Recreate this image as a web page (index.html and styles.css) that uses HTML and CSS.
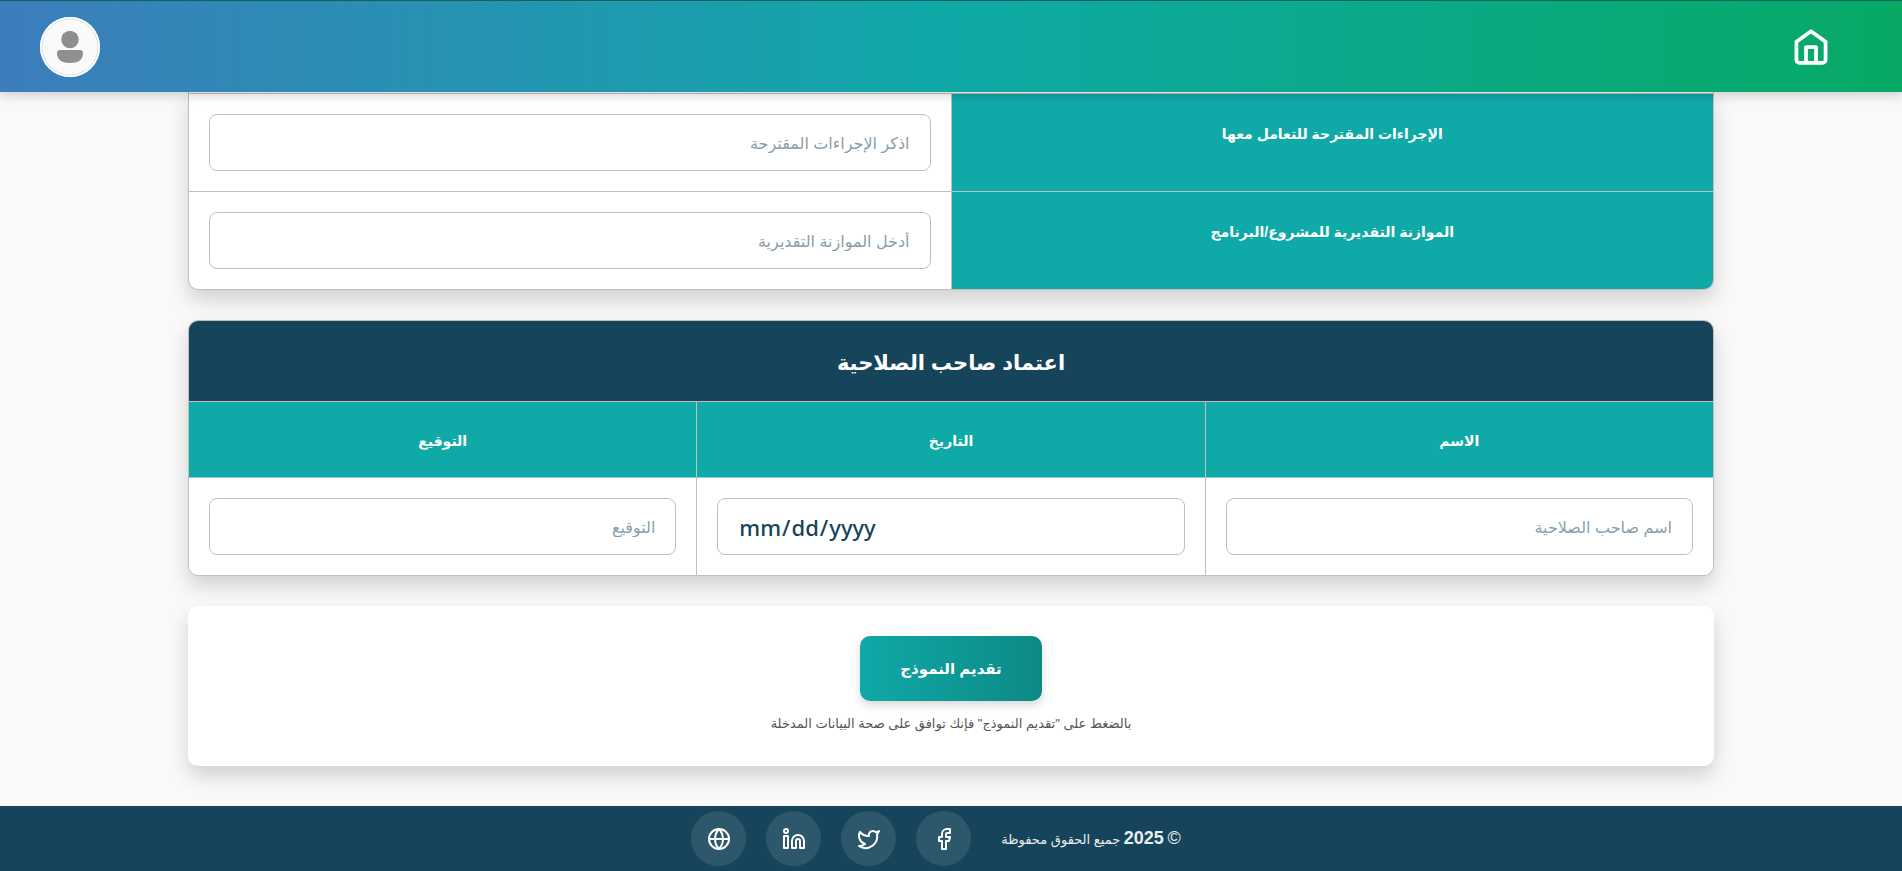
FILE: index.html
```html
<!DOCTYPE html>
<html lang="ar" dir="rtl">
<head>
<meta charset="utf-8">
<title>نموذج المشروع</title>
<meta name="viewport" content="width=device-width, initial-scale=1">
<link rel="stylesheet" href="styles.css">
</head>
<body>
<header class="topbar">
  <a class="home" href="#" aria-label="الرئيسية">
    <svg viewBox="0 0 24 24" width="50" height="50"><path d="M5 9.500 12 4.400l7 5.100v8.700a1.400 1.400 0 0 1-1.400 1.400H6.400A1.400 1.400 0 0 1 5 18.200z"/><path d="M9.600 19.500V12h4.800v7.500"/></svg>
  </a>
  <button class="avatar" type="button" aria-label="الملف الشخصي">
    <svg viewBox="0 0 60 60" width="60" height="60"><circle class="avatar-ring" cx="30" cy="30" r="28"/><circle cx="30" cy="22.500" r="8.700"/><path d="M20 33h20a3 3 0 0 1 3 3c0 7-5 10-13 10s-13-3-13-10a3 3 0 0 1 3-3z"/></svg>
  </button>
</header>

<main class="content">
  <section class="card fields">
    <div class="field">
      <label class="field-name" for="actions">الإجراءات المقترحة للتعامل معها</label>
      <div class="cell"><input class="input" id="actions" type="text" placeholder="اذكر الإجراءات المقترحة"></div>
    </div>
    <div class="field">
      <label class="field-name" for="budget">الموازنة التقديرية للمشروع/البرنامج</label>
      <div class="cell"><input class="input" id="budget" type="text" placeholder="أدخل الموازنة التقديرية"></div>
    </div>
  </section>

  <section class="card approval">
    <h2 class="card-title">اعتماد صاحب الصلاحية</h2>
    <div class="columns">
      <div class="column">
        <label class="column-name" for="name">الاسم</label>
        <div class="cell"><input class="input" id="name" type="text" placeholder="اسم صاحب الصلاحية"></div>
      </div>
      <div class="column">
        <label class="column-name" for="date">التاريخ</label>
        <div class="cell"><input class="input date" id="date" type="date" lang="en-US"></div>
      </div>
      <div class="column">
        <label class="column-name" for="signature">التوقيع</label>
        <div class="cell"><input class="input" id="signature" type="text" placeholder="التوقيع"></div>
      </div>
    </div>
  </section>

  <section class="card submit">
    <button class="submit-button" type="submit">تقديم النموذج</button>
    <p class="note">بالضغط على "تقديم النموذج" فإنك توافق على صحة البيانات المدخلة</p>
  </section>
</main>

<footer class="footer">
  <p class="copyright"><span class="mark">©</span> <b class="year">2025</b> جميع الحقوق محفوظة</p>
  <nav class="social">
    <a class="social-link" href="#" aria-label="فيسبوك"><svg viewBox="0 0 24 24" width="24" height="24"><path d="M18 2h-3a5 5 0 0 0-5 5v3H7v4h3v8h4v-8h3l1-4h-4V7a1 1 0 0 1 1-1h3z"/></svg></a>
    <a class="social-link" href="#" aria-label="تويتر"><svg viewBox="0 0 24 24" width="24" height="24"><path d="M22 4s-.7 2.100-2 3.400c1.600 10-9.400 17.300-18 11.600 2.200.1 4.400-.6 6-2C3 15.500.5 9.600 3 5c2.200 2.600 5.600 4.100 9 4-.9-4.200 4-6.600 7-3.800 1.100 0 3-1.200 3-1.200z"/></svg></a>
    <a class="social-link" href="#" aria-label="لينكدإن"><svg viewBox="0 0 24 24" width="24" height="24"><path d="M16 8a6 6 0 0 1 6 6v7h-4v-7a2 2 0 0 0-4 0v7h-4v-7a6 6 0 0 1 6-6z"/><path d="M2 9h4v12H2z"/><circle cx="4" cy="4" r="2"/></svg></a>
    <a class="social-link" href="#" aria-label="الموقع"><svg viewBox="0 0 24 24" width="24" height="24"><circle cx="12" cy="12" r="10"/><path d="M2 12h20"/><path d="M12 2a15.300 15.300 0 0 1 4 10 15.300 15.300 0 0 1-4 10 15.300 15.300 0 0 1-4-10 15.300 15.300 0 0 1 4-10z"/></svg></a>
  </nav>
</footer>
</body>
</html>
```
FILE: styles.css
```css
:root {
  --teal: #0fa9a7;
  --navy: #16445a;
  --line: #bfbfbf;
  --font: "Liberation Sans", "DejaVu Sans", sans-serif;
}

*, *::before, *::after { box-sizing: border-box; }

body {
  margin: 0;
  min-height: 100vh;
  display: flex;
  flex-direction: column;
  background: #f9f9f9;
  color: var(--navy);
  font-family: var(--font);
  font-size: 16px;
}

.topbar {
  position: sticky;
  top: 0;
  z-index: 1;
  display: flex;
  align-items: center;
  justify-content: space-between;
  height: 92px;
  padding: 0 66px 0 40px;
  border-top: 1px solid #14605f;
  background: linear-gradient(90deg, #3c7dbc, var(--teal) 50%, #07a965);
  box-shadow: 0 4px 10px rgba(0, 0, 0, 0.16);
}

.home { display: flex; }
.home svg { fill: none; stroke: #fff; stroke-width: 1.8; stroke-linejoin: round; }

.avatar {
  display: flex;
  padding: 0;
  border: 0;
  border-radius: 50%;
  background: #fafafa;
  box-shadow: inset 0 0 0 2px #fff;
}
.avatar svg { fill: #8f8f8f; }
.avatar .avatar-ring { fill: none; stroke: #b4d4e6; stroke-width: 0.6; }

.content {
  flex: 1;
  display: flex;
  flex-direction: column;
  gap: 30px;
  width: 100%;
  max-width: 1606px;
  margin: 0 auto;
  padding: 0 40px 40px;
}

.card {
  overflow: hidden;
  border-radius: 10px;
  background: #fff;
  box-shadow: 0 10px 20px rgba(0, 0, 0, 0.16);
}

.fields, .approval { border: 1px solid var(--line); }
.fields { border-top: 0; border-radius: 0 0 10px 10px; }

.field {
  display: grid;
  grid-template-columns: 1fr 1fr;
  gap: 1px;
  border-top: 1px solid var(--line);
  background: var(--line);
}
.fields .field:first-child { margin-top: 1px; }

.field-name {
  padding: 26px 20px;
  background: var(--teal);
  color: #fff;
  font-size: 14px;
  font-weight: 700;
  line-height: 28px;
  text-align: center;
}

.cell { padding: 20px; background: #fff; }

.input {
  display: block;
  width: 100%;
  height: 57px;
  padding: 2px 20px 0;
  border: 1px solid var(--line);
  border-radius: 8px;
  background: #fff;
  color: var(--navy);
  font-family: var(--font);
  font-size: 16px;
}
.input::placeholder { color: #8a9eab; opacity: 1; }

.date {
  padding: 0 20px;
  direction: ltr;
  font-family: "Noto Sans", sans-serif;
  font-size: 22px;
  font-weight: 500;
}
.date::-webkit-calendar-picker-indicator { display: none; }

.card-title {
  margin: 0;
  padding: 22px 20px 18px;
  background: var(--navy);
  color: #fff;
  font-size: 21px;
  line-height: 40px;
  text-align: center;
}

.columns {
  display: grid;
  grid-template-columns: repeat(3, 1fr);
  gap: 1px;
  border-top: 1px solid var(--line);
  background: var(--line);
}

.column-name {
  display: block;
  padding: 22px 20px 18px;
  border-bottom: 1px solid #8fd0cf;
  background: var(--teal);
  color: #fff;
  font-size: 14px;
  font-weight: 700;
  line-height: 35px;
  text-align: center;
}

.submit {
  display: flex;
  flex-direction: column;
  align-items: center;
  gap: 10px;
  padding: 30px;
}

.submit-button {
  padding: 15px 40px;
  border: 0;
  border-radius: 10px;
  background: linear-gradient(90deg, var(--teal), #0d8986);
  box-shadow: 0 4px 10px rgba(0, 0, 0, 0.16);
  color: #fff;
  font-family: var(--font);
  font-size: 15px;
  font-weight: 700;
  line-height: 35px;
}

.note {
  margin: 0;
  color: #555;
  font-size: 13px;
  line-height: 25px;
}

.footer {
  display: flex;
  align-items: center;
  justify-content: center;
  gap: 30px;
  padding: 5px 50px 5px 20px;
  background: var(--navy);
}

.copyright {
  margin: 0;
  color: #e8edef;
  font-size: 13px;
}
.mark, .year { font-size: 18px; }

.social { display: flex; gap: 20px; }
.social-link {
  display: flex;
  align-items: center;
  justify-content: center;
  width: 55px;
  height: 55px;
  border-radius: 50%;
  background: #2d576b;
}
.social-link svg {
  fill: none;
  stroke: #fff;
  stroke-width: 2;
  stroke-linecap: round;
  stroke-linejoin: round;
}
```
